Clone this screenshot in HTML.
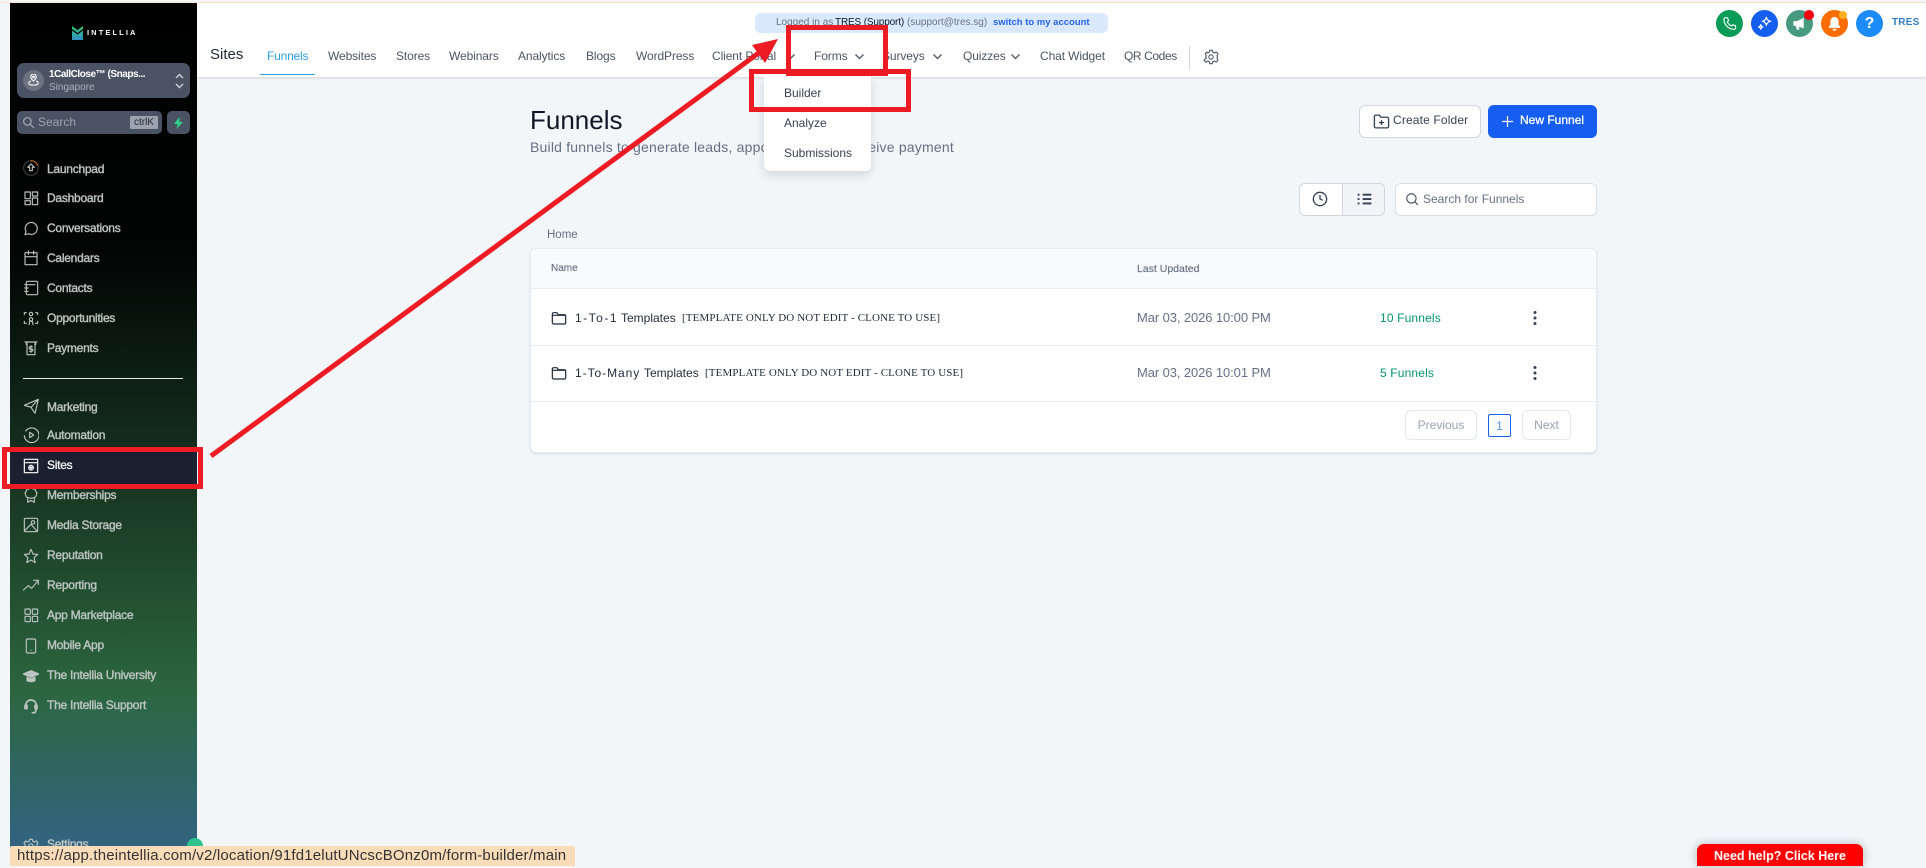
<!DOCTYPE html>
<html lang="en">
<head>
<meta charset="utf-8">
<title>Funnels</title>
<style>
html,body{margin:0;padding:0}
body{width:1926px;height:866px;position:relative;overflow:hidden;background:#f2f6f9;font-family:"Liberation Sans",Arial,sans-serif}
.a,.n,.s,.t{position:absolute;white-space:nowrap;line-height:16px}
.a svg{display:block}
#side{position:absolute;left:10px;top:3px;width:187px;height:863px;background:linear-gradient(180deg,#000 0,#020504 250px,#0b1a12 350px,#17331f 470px,#2c6640 690px,#33648a 863px)}
.s{left:47px;font-size:12px;letter-spacing:-.25px;color:#bcc4c0;-webkit-text-stroke:.4px #bcc4c0;margin-top:-7px}
.i{position:absolute;left:23px;width:16px;height:16px;margin-top:-8px;fill:none;stroke:#bcc4c0;stroke-width:1.7;stroke-linecap:round;stroke-linejoin:round}
.n{font-size:12px;color:#4b5563;top:48px;letter-spacing:-.1px}
.ch{position:absolute;top:54px;width:9px;height:6px;fill:none;stroke:#5a6472;stroke-width:1.5}
.t{color:#1f2937;font-size:12px;margin-top:-8px}
.m{font-family:"Liberation Serif",serif;font-size:11px;letter-spacing:.12px}
.b{position:absolute;box-sizing:border-box}
.rb{position:absolute;box-sizing:border-box;border:5px solid #ed1c24}
.c{position:absolute;width:27px;height:27px;border-radius:50%;top:10px}
.c svg{position:absolute;left:6px;top:6px;width:15px;height:15px}
</style>
</head>
<body>
<div class="b" style="left:0;top:2px;width:1926px;height:1px;background:#fbe3d0"></div>

<!-- header -->
<div class="b" style="left:197px;top:3px;width:1729px;height:74px;background:#fff;box-shadow:0 1px 3px rgba(0,0,0,.14)"></div>
<div class="b" style="left:755px;top:13px;width:353px;height:20px;background:#dbe9fe;border-radius:6px"></div>
<span class="a" style="left:776px;top:15px;font-size:10px;color:#6b7280">Logged in as</span>
<span class="a" style="left:835px;top:15px;font-size:10px;color:#111827;letter-spacing:-.15px">TRES (Support)</span>
<span class="a" style="left:907px;top:15px;font-size:10px;color:#6b7280">(support@tres.sg)</span>
<span class="a" style="left:993px;top:15px;font-size:9.5px;font-weight:bold;color:#2563eb">switch to my account</span>

<span class="a" style="left:210px;top:47px;font-size:15px;color:#1f2937">Sites</span>
<span class="n" style="left:267px;color:#2f9fe4;letter-spacing:-.2px">Funnels</span>
<div class="b" style="left:260px;top:74px;width:55px;height:1px;background:#2f9fe4"></div>
<span class="n" style="left:328px">Websites</span>
<span class="n" style="left:396px">Stores</span>
<span class="n" style="left:449px">Webinars</span>
<span class="n" style="left:518px">Analytics</span>
<span class="n" style="left:586px">Blogs</span>
<span class="n" style="left:636px">WordPress</span>
<span class="n" style="left:712px">Client Portal</span>
<svg class="ch" style="left:786px" viewBox="0 0 9 6"><path d="M.5.5l4 4 4-4"/></svg>
<span class="n" style="left:814px">Forms</span>
<svg class="ch" style="left:855px" viewBox="0 0 9 6"><path d="M.5.5l4 4 4-4"/></svg>
<span class="n" style="left:882px">Surveys</span>
<svg class="ch" style="left:933px" viewBox="0 0 9 6"><path d="M.5.5l4 4 4-4"/></svg>
<span class="n" style="left:963px">Quizzes</span>
<svg class="ch" style="left:1011px" viewBox="0 0 9 6"><path d="M.5.5l4 4 4-4"/></svg>
<span class="n" style="left:1040px">Chat Widget</span>
<span class="n" style="left:1124px;letter-spacing:-.4px">QR Codes</span>
<div class="b" style="left:1189px;top:46px;width:1px;height:23px;background:#d1d5db"></div>
<svg class="a" style="left:1203px;top:49px" width="16" height="16" viewBox="0 0 24 24" fill="none" stroke="#4b5563" stroke-width="1.6" stroke-linejoin="round"><path d="M10 2h4l.7 3 2.3 1 2.7-1.6 2.8 2.8L20.900 10l1 2-1 2 1.600 2.800-2.800 2.800-2.700-1.600-2.300 1-.7 3h-4l-.7-3-2.300-1-2.700 1.600-2.800-2.800L4.900 14l-1-2 1-2-1.600-2.800 2.800-2.800L7 6l2.300-1z"/><circle cx="12" cy="12" r="3.300"/></svg>

<!-- top right icons -->
<div class="c" style="left:1716px;background:#0a9b57"><svg viewBox="0 0 24 24" fill="none" stroke="#fff" stroke-width="1.800" stroke-linejoin="round"><path d="M6 2.500l3 .5 1.500 4.500-2 2a13 13 0 0 0 6.500 6.500l2-2 4.500 1.500.5 3c0 2-2 3-3.500 2.900C10 20.500 3.500 14 3 6c0-2 1-3.500 3-3.500z"/></svg></div>
<div class="c" style="left:1751px;background:#155eef"><svg viewBox="0 0 24 24" fill="none" stroke="#fff" stroke-width="2" stroke-linejoin="round"><path d="M15 2c.8 4 2.500 5.700 7 6.500-4.500.8-6.200 2.500-7 6.500-.8-4-2.500-5.700-6.500-6.500C12.500 7.700 14.200 6 15 2zM6 14c.4 2.200 1.300 3.100 3.500 3.500C7.300 17.900 6.400 18.800 6 21c-.4-2.200-1.300-3.100-3.500-3.500C4.700 17.100 5.600 16.200 6 14z"/></svg></div>
<div class="c" style="left:1786px;background:#479a80"><svg viewBox="0 0 24 24" fill="#fff" stroke="#fff" stroke-width="1.500" stroke-linejoin="round"><path d="M3 9h5l10-5v15L8 15H3zM7 15l1 6h3l-1-5"/></svg></div>
<div class="b" style="left:1804px;top:10px;width:10px;height:10px;border-radius:50%;background:#f5000f"></div>
<div class="c" style="left:1821px;background:#ff6d00"><svg viewBox="0 0 24 24" fill="#fff"><path d="M12 1.500c-4 0-6.500 3-6.500 7v5L3 17.500v1.500h18v-1.500l-2.500-4v-5c0-4-2.500-7-6.500-7zM9 20.500a3 3 0 0 0 6 0z"/></svg></div>
<div class="b" style="left:1839px;top:11px;width:8px;height:8px;border-radius:50%;background:#fdb022"></div>
<div class="c" style="left:1856px;background:#1d8cf8;color:#fff;font-weight:bold;font-size:16px;line-height:27px;text-align:center">?</div>
<span class="a" style="left:1892px;top:15px;font-size:10px;font-weight:bold;color:#2f80c8;letter-spacing:.2px">TRES</span>

<!-- sidebar -->
<div id="side"></div>
<svg class="a" style="left:72px;top:26px" width="11" height="14" viewBox="0 0 11 14"><defs><linearGradient id="lg" x1="0" y1="0" x2="0" y2="1"><stop offset="0" stop-color="#2fc46b"/><stop offset="1" stop-color="#2f8fc8"/></linearGradient></defs><path d="M0 0l5.500 4L11 0v3L5.500 7 0 3zM0 4.500l5.500 4 5.500-4V14H0z" fill="url(#lg)"/></svg>
<span class="a" style="left:87px;top:25px;font-size:7.5px;font-weight:bold;color:#fff;letter-spacing:2.1px">INTELLIA</span>

<div class="b" style="left:17px;top:63px;width:173px;height:35px;border-radius:7px;background:#495363"></div>
<div class="b" style="left:23px;top:70px;width:21px;height:21px;border-radius:50%;background:#6b7380"></div>
<svg class="a" style="left:27px;top:74px" width="13" height="13" viewBox="0 0 24 24" fill="none" stroke="#fff" stroke-width="2"><path d="M12 13s5-4.500 5-8A5 5 0 0 0 7 5c0 3.500 5 8 5 8z"/><circle cx="12" cy="5.500" r="1.500"/><path d="M7 13c-3 1-5 3-3 6 2 2 14 2 16 0 2-3 0-5-3-6"/></svg>
<span class="a" style="left:49px;top:67px;font-size:10px;font-weight:bold;color:#fff;letter-spacing:-.45px">1CallClose™ (Snaps...</span>
<span class="a" style="left:49px;top:80px;font-size:10px;color:#a9b1bb">Singapore</span>
<svg class="a" style="left:174px;top:73px" width="11" height="16" viewBox="0 0 11 16" fill="none" stroke="#c8ced6" stroke-width="1.500"><path d="M2 5l3.500-3.500L9 5M2 11l3.500 3.500L9 11"/></svg>

<div class="b" style="left:17px;top:111px;width:145px;height:23px;border-radius:5px;background:#495363"></div>
<svg class="a" style="left:22px;top:116px" width="13" height="13" viewBox="0 0 24 24" fill="none" stroke="#aab2bc" stroke-width="2"><circle cx="10" cy="10" r="7"/><path d="M15 15l7 7"/></svg>
<span class="a" style="left:38px;top:114px;font-size:12px;color:#9ca3af">Search</span>
<div class="b" style="left:130px;top:116px;width:28px;height:13px;background:#9ca3af;color:#1f2937;font-size:10px;line-height:13px;text-align:center;border-radius:1px">ctrlK</div>
<div class="b" style="left:167px;top:111px;width:23px;height:23px;border-radius:5px;background:#495363"></div>
<svg class="a" style="left:173px;top:117px" width="11" height="12" viewBox="0 0 11 12"><path d="M6.500 0L1 7h3.500L3.500 12 10 5H6.500z" fill="#2fd08a"/></svg>

<div class="b" style="left:23px;top:378px;width:160px;height:1px;background:#e5e7eb"></div>

<span class="s" style="top:168px">Launchpad</span>
<svg class="i" style="top:168px" viewBox="0 0 24 24"><circle cx="12" cy="12" r="11" stroke="#3a3a3a"/><path d="M12 1a11 11 0 0 1 10 7" stroke="#c46a20"/><path d="M12 6l5 5h-3v5h-4v-5H7z"/></svg>
<span class="s" style="top:197px">Dashboard</span>
<svg class="i" style="top:198px" viewBox="0 0 24 24"><rect x="3" y="3" width="8" height="10"/><rect x="14" y="3" width="8" height="6"/><rect x="3" y="16" width="8" height="6"/><rect x="14" y="12" width="8" height="10"/></svg>
<span class="s" style="top:227px">Conversations</span>
<svg class="i" style="top:228px" viewBox="0 0 24 24"><path d="M3 22l1.500-5A9 9 0 1 1 8 20.500c-1.500.5-3 1.500-5 1.500z"/></svg>
<span class="s" style="top:257px">Calendars</span>
<svg class="i" style="top:258px" viewBox="0 0 24 24"><rect x="3" y="4" width="18" height="18"/><path d="M3 10h18M8 1.500v5M16 1.500v5"/></svg>
<span class="s" style="top:287px">Contacts</span>
<svg class="i" style="top:288px" viewBox="0 0 24 24"><rect x="5" y="2" width="17" height="20" rx="2"/><path d="M9 7h9M2.500 7h5M2.500 12h5M2.500 17h5"/></svg>
<span class="s" style="top:317px">Opportunities</span>
<svg class="i" style="top:318px" viewBox="0 0 24 24"><circle cx="12" cy="6" r="2.500"/><circle cx="12" cy="14" r="2.500"/><path d="M9 22l1-5h4l1 5M2 4h3M2 4v3M22 4h-3M22 4v3M2 20h3M2 20v-3M22 20h-3M22 20v-3"/></svg>
<span class="s" style="top:347px">Payments</span>
<svg class="i" style="top:348px" viewBox="0 0 24 24"><path d="M3 3h18M5 3v4M19 3v4M6 5v17h12V5"/><path d="M14 10h-3a1.500 1.500 0 0 0 0 3.500h2a1.500 1.500 0 0 1 0 3.500h-3M12 8.500v10"/></svg>
<span class="s" style="top:406px">Marketing</span>
<svg class="i" style="top:406px" viewBox="0 0 24 24"><path d="M2 11L23 2l-5 21-6-9zM12 14L23 2"/></svg>
<span class="s" style="top:434px">Automation</span>
<svg class="i" style="top:435px" viewBox="0 0 24 24"><path d="M4 6a11 11 0 1 1-2 7"/><path d="M10 8l6 4-6 4z"/></svg>

<div class="b" style="left:10px;top:450px;width:187px;height:35px;background:#1a2030"></div>
<span class="s" style="top:464px;color:#fff;-webkit-text-stroke:.25px #fff">Sites</span>
<svg class="i" style="top:466px;stroke:#fff" viewBox="0 0 24 24"><rect x="2" y="2" width="20" height="20"/><path d="M2 7h20"/><circle cx="12" cy="14.500" r="3.500"/><path d="M8.500 14.500h7M12 11v7"/></svg>
<span class="s" style="top:494px">Memberships</span>
<svg class="i" style="top:495px" viewBox="0 0 24 24"><path d="M12 1l3 2h3l1 3 2 3-1 3-1 3-3 1-4 1-4-1-3-1-1-3-1-3 2-3 1-3h3zM7 16v7l5-3 5 3v-7"/></svg>
<span class="s" style="top:524px">Media Storage</span>
<svg class="i" style="top:525px" viewBox="0 0 24 24"><rect x="2" y="2" width="20" height="20" rx="2"/><circle cx="15" cy="8" r="2.500"/><path d="M3 20L12 11l9 10"/></svg>
<span class="s" style="top:554px">Reputation</span>
<svg class="i" style="top:556px" viewBox="0 0 24 24"><path d="M12 2l3 7 7 .7-5.300 4.800L18.300 22 12 18l-6.300 4 1.600-7.500L2 9.700 9 9z"/></svg>
<span class="s" style="top:584px">Reporting</span>
<svg class="i" style="top:585px" viewBox="0 0 24 24"><path d="M0 20l8-7 5 4L23 5M16 5h7v6"/></svg>
<span class="s" style="top:614px">App Marketplace</span>
<svg class="i" style="top:615px" viewBox="0 0 24 24"><rect x="3" y="3" width="8" height="8" rx="1.500"/><rect x="14" y="3" width="8" height="8" rx="1.500"/><rect x="3" y="14" width="8" height="8" rx="1.500"/><rect x="14" y="14" width="8" height="8" rx="1.500"/></svg>
<span class="s" style="top:644px">Mobile App</span>
<svg class="i" style="top:646px" viewBox="0 0 24 24"><rect x="5" y="1.500" width="14" height="21" rx="2"/><path d="M12 18.500v.1"/></svg>
<span class="s" style="top:674px">The Intellia University</span>
<svg class="i" style="top:676px;fill:#bcc4c0" viewBox="0 0 24 24"><path d="M0 9l12-5 12 5-12 5zM6 14v5c3 2 9 2 12 0v-5l-6 2.500z"/></svg>
<span class="s" style="top:704px">The Intellia Support</span>
<svg class="i" style="top:706px;stroke-width:2.500" viewBox="0 0 24 24"><path d="M4 14v-3a8 8 0 0 1 16 0v3M3 11h3v5H3zM18 11h3v5h-3zM14 22h4l2-5"/></svg>
<span class="s" style="top:843px">Settings</span>
<svg class="i" style="top:846px" viewBox="0 0 24 24"><path d="M10 2h4l.7 3 2.300 1 2.700-1.600 2.800 2.800L20.900 10v4l1.600 2.700-2.800 2.800-2.700-1.600-2.300 1-.7 3h-4l-.7-3-2.300-1-2.700 1.600-2.800-2.800L3.100 14v-4L1.500 7.200l2.800-2.800L7 6l2.300-1z"/><circle cx="12" cy="12" r="3.300"/></svg>
<div class="b" style="left:187px;top:838px;width:16px;height:16px;border-radius:50%;background:#2fc48d"></div>

<!-- page header -->
<span class="a" style="left:530px;top:105px;font-size:26px;line-height:30px;color:#101828">Funnels</span>
<span class="a" style="left:530px;top:139px;font-size:14px;color:#667085;letter-spacing:.2px">Build funnels to generate leads, appointments, or receive payment</span>

<div class="b" style="left:1359px;top:105px;width:122px;height:33px;background:#fff;border:1px solid #d0d5dd;border-radius:6px"></div>
<svg class="a" style="left:1373px;top:113px" width="17" height="17" viewBox="0 0 24 24" fill="none" stroke="#344054" stroke-width="1.900" stroke-linejoin="round"><path d="M2 5a2 2 0 0 1 2-2h5l2 3h9a2 2 0 0 1 2 2v11a2 2 0 0 1-2 2H4a2 2 0 0 1-2-2zM12 10v7M8.500 13.500h7"/></svg>
<span class="a" style="left:1393px;top:112px;font-size:12px;color:#344054;letter-spacing:.15px">Create Folder</span>
<div class="b" style="left:1488px;top:105px;width:109px;height:33px;background:#155eef;border-radius:6px"></div>
<svg class="a" style="left:1501px;top:115px" width="13" height="13" viewBox="0 0 13 13" stroke="#fff" stroke-width="1.200"><path d="M6.500 1v11M1 6.500h11"/></svg>
<span class="a" style="left:1520px;top:112px;font-size:12px;color:#fff;-webkit-text-stroke:.3px #fff">New Funnel</span>

<div class="b" style="left:1299px;top:183px;width:86px;height:33px;background:#fff;border:1px solid #d0d5dd;border-radius:6px;overflow:hidden"><div class="b" style="left:42px;top:0;width:43px;height:31px;background:#f2f4f7;border-left:1px solid #d0d5dd"></div></div>
<svg class="a" style="left:1312px;top:191px" width="16" height="16" viewBox="0 0 24 24" fill="none" stroke="#344054" stroke-width="2"><circle cx="12" cy="12" r="10"/><path d="M12 6v6l4 2"/></svg>
<svg class="a" style="left:1357px;top:191px" width="15" height="16" viewBox="0 0 24 24" fill="none" stroke="#344054" stroke-width="3"><path d="M9 5h14M9 12h14M9 19h14M1 5h3M1 12h3M1 19h3"/></svg>
<div class="b" style="left:1395px;top:183px;width:202px;height:33px;background:#fff;border:1px solid #d9dee5;border-radius:6px"></div>
<svg class="a" style="left:1405px;top:192px" width="14" height="14" viewBox="0 0 24 24" fill="none" stroke="#475467" stroke-width="2"><circle cx="11" cy="11" r="8"/><path d="M17 17l5 5"/></svg>
<span class="a" style="left:1423px;top:191px;font-size:12px;color:#667085">Search for Funnels</span>

<span class="a" style="left:547px;top:227px;font-size:11.500px;color:#667085">Home</span>

<!-- table -->
<div class="b" style="left:530px;top:248px;width:1067px;height:205px;background:#fff;border:1px solid #e7eaee;border-radius:6px;box-shadow:0 1px 2px rgba(16,24,40,.12)"></div>
<div class="b" style="left:531px;top:249px;width:1065px;height:40px;background:#f9fafb;border-bottom:1px solid #e7eaee;border-radius:6px 6px 0 0"></div>
<div class="b" style="left:531px;top:345px;width:1065px;height:1px;background:#e7eaee"></div>
<div class="b" style="left:531px;top:401px;width:1065px;height:1px;background:#e7eaee"></div>
<span class="t" style="left:551px;top:269px;font-size:10px;color:#667085;-webkit-text-stroke:.15px #667085">Name</span>
<span class="t" style="left:1137px;top:269px;font-size:10.500px;color:#667085;-webkit-text-stroke:.15px #667085">Last Updated</span>

<svg class="a" style="left:551px;top:310px" width="16" height="16" viewBox="0 0 24 24" fill="none" stroke="#1f2937" stroke-width="1.800" stroke-linejoin="round"><path d="M2 6a2 2 0 0 1 2-2h5l2 3h9a2 2 0 0 1 2 2v10a2 2 0 0 1-2 2H4a2 2 0 0 1-2-2zM2 8h20"/></svg>
<span class="t" style="left:575px;top:318px;letter-spacing:1.500px">1-To-1</span>
<span class="t" style="left:621px;top:318px">Templates</span>
<span class="t m" style="left:682px;top:318px">[TEMPLATE ONLY DO NOT EDIT - CLONE TO USE]</span>
<span class="t" style="left:1137px;top:318px;font-size:13px;color:#667085;letter-spacing:-.1px">Mar 03, 2026 10:00 PM</span>
<span class="t" style="left:1380px;top:318px;color:#059669;letter-spacing:.15px">10 Funnels</span>
<svg class="a" style="left:1532px;top:310px" width="6" height="16" viewBox="0 0 6 16" fill="#344054"><circle cx="3" cy="2.500" r="1.500"/><circle cx="3" cy="8" r="1.500"/><circle cx="3" cy="13.500" r="1.500"/></svg>

<svg class="a" style="left:551px;top:365px" width="16" height="16" viewBox="0 0 24 24" fill="none" stroke="#1f2937" stroke-width="1.800" stroke-linejoin="round"><path d="M2 6a2 2 0 0 1 2-2h5l2 3h9a2 2 0 0 1 2 2v10a2 2 0 0 1-2 2H4a2 2 0 0 1-2-2zM2 8h20"/></svg>
<span class="t" style="left:575px;top:373px;letter-spacing:.95px">1-To-Many</span>
<span class="t" style="left:644px;top:373px">Templates</span>
<span class="t m" style="left:705px;top:373px">[TEMPLATE ONLY DO NOT EDIT - CLONE TO USE]</span>
<span class="t" style="left:1137px;top:373px;font-size:13px;color:#667085;letter-spacing:-.1px">Mar 03, 2026 10:01 PM</span>
<span class="t" style="left:1380px;top:373px;color:#059669;letter-spacing:.15px">5 Funnels</span>
<svg class="a" style="left:1532px;top:365px" width="6" height="16" viewBox="0 0 6 16" fill="#344054"><circle cx="3" cy="2.500" r="1.500"/><circle cx="3" cy="8" r="1.500"/><circle cx="3" cy="13.500" r="1.500"/></svg>

<div class="b" style="left:1405px;top:410px;width:72px;height:30px;border:1px solid #e4e7ec;border-radius:6px;color:#98a2b3;font-size:12px;line-height:28px;text-align:center">Previous</div>
<div class="b" style="left:1488px;top:414px;width:23px;height:23px;border:1px solid #155eef;border-radius:2px;color:#5b8def;font-size:12px;line-height:22px;text-align:center">1</div>
<div class="b" style="left:1522px;top:410px;width:49px;height:30px;border:1px solid #e4e7ec;border-radius:6px;color:#98a2b3;font-size:12px;line-height:28px;text-align:center">Next</div>

<!-- dropdown -->
<div class="b" style="left:764px;top:77px;width:107px;height:94px;background:#fff;border-radius:0 0 6px 6px;box-shadow:0 4px 10px rgba(16,24,40,.14)"></div>
<span class="t" style="left:784px;top:93px;color:#374151">Builder</span>
<span class="t" style="left:784px;top:123px;color:#374151">Analyze</span>
<span class="t" style="left:784px;top:153px;color:#374151">Submissions</span>

<!-- annotations -->
<div class="rb" style="left:2px;top:447px;width:201px;height:42px"></div>
<div class="rb" style="left:786px;top:25px;width:102px;height:51px"></div>
<div class="rb" style="left:749px;top:69px;width:162px;height:43px"></div>
<svg class="a" style="left:0;top:0" width="1926" height="866" viewBox="0 0 1926 866"><path d="M211 456L760 52" stroke="#ed1c24" stroke-width="5" fill="none"/><path d="M778 39L752 45L765 63z" fill="#ed1c24"/></svg>

<!-- status tooltip -->
<div class="b" style="left:10px;top:846px;width:565px;height:20px;background:#fbdcb9;border-radius:2px 2px 0 0;color:#333;font-size:15px;line-height:20px;padding-left:7px;letter-spacing:.18px;white-space:nowrap;overflow:hidden">https://app.theintellia.com/v2/location/91fd1elutUNcscBOnz0m/form-builder/main</div>

<!-- help -->
<div class="b" style="left:1697px;top:844px;width:166px;height:22px;background:#fe0000;border-radius:7px 7px 0 0;box-shadow:0 0 10px rgba(0,0,0,.25);color:#fff;font-size:12.500px;font-weight:bold;line-height:24px;text-align:center;white-space:nowrap">Need help? Click Here</div>
</body>
</html>
